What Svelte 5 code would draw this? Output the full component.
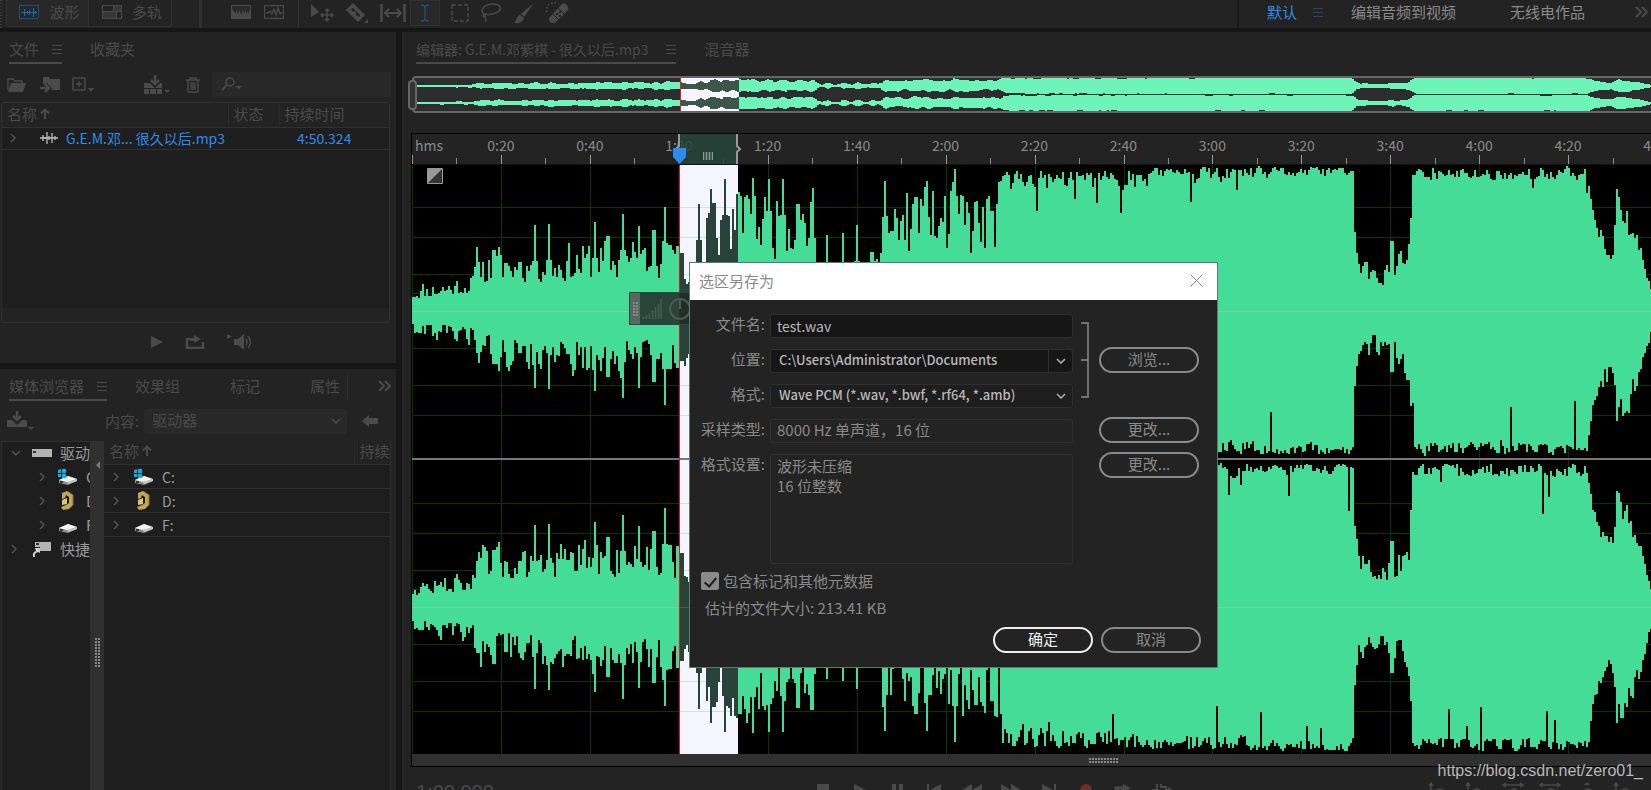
<script>
	const W = 1239;
	const H = 588;
	const SEL = [267, 326];
	const STEP = 88.94;

	// x, quiet level, loud level, skew (below 1 leans to the loud side)
	const envelope = [
		[0, 12, 34, 2],
		[60, 18, 44, 2],
		[63, 26, 70, 1.6],
		[250, 32, 86, 1.6],
		[267, 24, 66, 2],
		[292, 28, 76, 2],
		[294, 44, 134, 1.2],
		[326, 52, 130, 1.1],
		[400, 44, 134, 1.1],
		[402, 16, 46, 3],
		[468, 18, 60, 3],
		[469, 44, 136, 1.2],
		[588, 44, 138, 1.1],
		[590, 92, 142, 0.3],
		[700, 98, 142, 0.3],
		[770, 116, 145, 0.5],
		[940, 130, 145, 1.3],
		[941, 82, 95, 1],
		[946, 36, 62, 1],
		[960, 22, 46, 1],
		[985, 24, 60, 1],
		[997, 38, 76, 1],
		[999, 130, 146, 1.3],
		[1175, 130, 146, 1.3],
		[1180, 92, 108, 1],
		[1192, 52, 76, 1],
		[1202, 46, 74, 1],
		[1204, 86, 124, 1],
		[1225, 56, 90, 1],
		[1230, 42, 56, 1],
		[1239, 14, 22, 1]
	];

	const spikes = [
		[65, 67], [81, 79], [93, 66], [107, 67], [122, 86], [136, 87], [155, 68], [182, 89], [195, 93],
		[210, 97], [226, 85], [241, 99], [252, 104], [257, 84], [265, 83], [269, 76], [286, 107],
		[298, 122], [301, 124], [312, 132], [324, 117], [327, 132], [335, 130], [340, 133], [356, 132],
		[370, 132], [385, 125], [399, 127], [414, 76], [430, 78], [444, 86], [459, 77], [472, 130],
		[503, 132], [514, 130], [542, 142], [563, 122], [579, 118], [979, 88], [1204, 122]
	];

	function random(seed) {
		let s = seed;
		return () => {
			s = (s * 1664525 + 1013904223) % 4294967296;
			return s / 4294967296;
		};
	}

	function levels(seed, scale) {
		const rnd = random(seed);
		const out = [];
		let drift = 0.5;
		let k = 0;
		for (let x = 0; x < W; x += 2) {
			while (k < envelope.length - 2 && envelope[k + 1][0] <= x) k++;
			const [x0, lo0, hi0, skew] = envelope[k];
			const [x1, lo1, hi1] = envelope[k + 1];
			const t = (x - x0) / (x1 - x0);
			const lo = lo0 + (lo1 - lo0) * t;
			const hi = hi0 + (hi1 - hi0) * t;
			drift = drift * 0.25 + rnd() * 0.75;
			let a = lo + (hi - lo) * Math.pow(drift, skew);
			if (x > 590 && x < 1175 && a > 110 && rnd() < 0.04) a -= rnd() * 45;
			if (x < 590) a *= scale;
			for (const [sx, top] of spikes) {
				const d = Math.abs(x - sx);
				if (d < 8) a = Math.max(a, top * scale - d * 18);
			}
			out.push(Math.min(a, 146));
		}
		return out;
	}

	// closed outline of one channel between two x positions
	function outline(up, down, mid, gain, from, to) {
		let d = `M${from} ${mid}`;
		const first = Math.floor(from / 2);
		const last = Math.min(Math.ceil(to / 2), up.length);
		for (let i = first; i < last; i++) {
			d += `V${Math.round(mid - up[i] * gain)}H${Math.min(i * 2 + 2, to)}`;
		}
		for (let i = last - 1; i >= first; i--) {
			d += `V${Math.round(mid + down[i] * gain)}H${Math.max(i * 2, from)}`;
		}
		return d + 'Z';
	}

	const channels = [
		{ mid: 146, up: levels(11, 1), down: levels(29, 0.9) },
		{ mid: 441, up: levels(47, 0.95), down: levels(83, 0.95) }
	];

	const smooth = (a) => a.map((v, i) => (v + (a[i + 1] ?? v) + (a[i - 1] ?? v)) / 3);
	const overview = channels.map((c, i) => ({ mid: 8 + i * 18, up: smooth(c.up), down: smooth(c.down) }));

	const offsets = [-104, -74, -37, -18, 0, 18, 37, 74, 104];
	const rows = channels.flatMap((c) => offsets.map((o) => c.mid + o + 0.5));
	const cols = Array.from({ length: 14 }, (_, i) => Math.round(i * STEP) + 0.5);
	const minor = Array.from({ length: 14 }, (_, i) => Math.round((i + 0.5) * STEP) + 0.5);
	const times = ['0:20', '0:40', '1:00', '1:20', '1:40', '2:00', '2:20', '2:40', '3:00', '3:20', '3:40', '4:00', '4:20', '4:40'];

	const drives = ['C:', 'D:', 'F:'];
	let fileName = $state('test.wav');
	let metadata = $state(true);
</script>

{#snippet menu()}
	<svg class="menu" width="10" height="10" viewBox="0 0 10 10"><path d="M0 1.5H10M0 5.5H10M0 9.5H10" stroke="currentColor" /></svg>
{/snippet}

{#snippet more()}
	<svg width="14" height="12" viewBox="0 0 14 12"><path d="M1 1L6 6L1 11M7 1L12 6L7 11" fill="none" stroke="currentColor" stroke-width="2" /></svg>
{/snippet}

{#snippet chevron()}
	<svg class="chevron" width="6" height="10" viewBox="0 0 6 10"><path d="M1 1L5 5L1 9" fill="none" stroke="#555" stroke-width="1.3" /></svg>
{/snippet}

{#snippet sorted()}
	<svg class="sorted" width="10" height="12" viewBox="0 0 10 12"><path d="M5 11V2M1 5.500L5 1.500L9 5.500" fill="none" stroke="currentColor" stroke-width="2" /></svg>
{/snippet}

{#snippet drive(name)}
	<svg class="drive" width="20" height="20" viewBox="0 0 20 20">
		{#if name === 'D:'}
			<path d="M4 2L9 0L15 4V14L11 18L5 19L3 16L8 14L11 12V6L8 4L7 7L4 8Z" fill="#c2a45a" />
			<path d="M4 9L9 7V13L4 14Z" fill="#dcc27a" />
			<path d="M9 0L15 4V14" fill="none" stroke="#8b713a" />
		{:else}
			<path d="M1 13L10 9L19 12V14L10 18L1 16Z" fill="#8c8c8c" />
			<path d="M1 13L10 9L19 12L9 15Z" fill="#f4f4f4" />
			<path d="M9 15L19 12V14L10 17Z" fill="#c9c9c9" />
			<path d="M2 14H5V16H2Z" fill="#333" />
			{#if name === 'C:'}
				<path d="M0 3L3 2V6H0ZM4 2H8V6H4ZM0 7H3V10H0ZM4 7H8V11H4Z" fill="#00b4f0" />
			{/if}
		{/if}
	</svg>
{/snippet}

<div class="app">
	<header class="toolbar">
		<span class="grip"></span>
		<div class="modes">
			<button class="mode on">
				<svg width="20" height="14" viewBox="0 0 20 14"><path d="M.5 .5H19.500V13.500H.5Z" fill="#1c2b39" stroke="#2c4b69" /><path d="M2 7.500H18M5.500 4V11M8.500 6V9M10.500 5V10M14.500 3V12M16.500 6V9" stroke="#376390" /></svg>
				波形
			</button>
			<button class="mode">
				<svg width="20" height="14" viewBox="0 0 20 14"><path d="M1 7H14V13H1ZM12 1H19V6H12Z" fill="#373737" /><path d="M.5 .5H19.500V13.500H.5ZM1 6.500H19M11.500 1V6M14.500 7V13" fill="none" stroke="currentColor" /></svg>
				多轨
			</button>
		</div>
		<span class="bar"></span>
		<div class="tools views">
			<button aria-label="频谱"><svg width="20" height="14" viewBox="0 0 20 14"><path d="M0 0H20V14H0Z" fill="currentColor" /><path d="M1 1H19V7L18 5V9L16 6V10L14 4V9L12 5V8L11 4V10L8 5V9L7 6V10L5 4V9L3 6V8L1 3Z" fill="#2a2a2a" /></svg></button>
			<button aria-label="音高"><svg width="20" height="14" viewBox="0 0 20 14"><path d="M.5 .5H19.500V13.500H.5ZM2 8H4L6 6L8 9L10 4L12 10L14 3L16 9L18 7" fill="none" stroke="currentColor" stroke-width="1.300" /></svg></button>
		</div>
		<div class="tools">
			<button aria-label="移动"><svg width="24" height="20" viewBox="0 0 24 20"><path d="M1 1L9 9L6 11L1 14Z" fill="currentColor" /><path d="M17 6V18M11 12H23M15 8L17 6L19 8M15 16L17 18L19 16M13 10L11 12L13 14M21 10L23 12L21 14" fill="none" stroke="currentColor" stroke-width="1.500" /></svg></button>
			<button aria-label="剃刀"><svg width="24" height="22" viewBox="0 0 24 22"><path d="M1 8L8 1L20 13L13 20Z" fill="currentColor" /><path d="M6 7L8 6L15 13L14 15L11 13L11 10L7 9Z" fill="#232323" /><path d="M23 17V21H19Z" fill="currentColor" /></svg></button>
			<button aria-label="滑动"><svg width="26" height="18" viewBox="0 0 26 18"><path d="M1.500 0V18M24.500 0V18" stroke="currentColor" stroke-width="2.500" /><path d="M5 9H21M9 5L5 9L9 13M17 5L21 9L17 13" fill="none" stroke="currentColor" stroke-width="2" /></svg></button>
			<button class="picked" aria-label="时间选择"><svg width="10" height="18" viewBox="0 0 10 18"><path d="M1 1C3 1 5 1 5 4V14C5 17 3 17 1 17M9 1C7 1 5 1 5 4M5 14C5 17 7 17 9 17" fill="none" stroke="#2b4f73" stroke-width="1.300" /></svg></button>
			<button aria-label="框选"><svg width="18" height="18" viewBox="0 0 18 18"><path d="M1 1H17V17H1Z" fill="none" stroke="currentColor" stroke-width="1.500" stroke-dasharray="4 2" /></svg></button>
			<button aria-label="套索"><svg width="22" height="20" viewBox="0 0 22 20"><path d="M4 11C-1 7 5 1 13 1C20 1 22 5 19 8C16 11 9 12 5 11C3 11 2 13 4 14C6 14 6 12 4 11M4 14C7 15 6 17 5 19" fill="none" stroke="currentColor" stroke-width="1.500" /></svg></button>
			<button aria-label="画笔"><svg width="22" height="21" viewBox="0 0 22 21"><path d="M21 0L11 14L8 11Z" fill="currentColor" /><path d="M7 12L11 15C10 19 6 21 1 20C4 18 3 13 7 12Z" fill="currentColor" /></svg></button>
			<button aria-label="污点修复"><svg width="24" height="22" viewBox="0 0 24 22"><path d="M3 16L16 2Q18 0 21 3Q23 6 22 8L9 21Q7 22 4 20Q2 18 3 16Z" fill="currentColor" /><path d="M7 12L13 18M12 6L18 12" stroke="#232323" /><path d="M10 11H12V13H10ZM13 9H15V11H13ZM13 13H15V15H13Z" fill="#232323" /><path d="M1 10C-1 4 4 0 11 1" fill="none" stroke="currentColor" stroke-width="1.500" stroke-dasharray="1.500 2" /></svg></button>
		</div>
		<nav class="spaces">
			<button class="space on">默认 {@render menu()}</button>
			<button class="space">编辑音频到视频</button>
			<button class="space last">无线电作品</button>
			<button class="dim" aria-label="更多">{@render more()}</button>
		</nav>
	</header>

	<div class="workspace">
		<aside class="side">
			<section class="panel files">
				<div class="tabs">
					<button class="tab on">文件 {@render menu()}</button>
					<button class="tab">收藏夹</button>
				</div>
				<div class="actions">
					<button aria-label="打开"><svg width="20" height="14" viewBox="0 0 20 14"><path d="M1 12V1H6L8 3H15V5" fill="none" stroke="currentColor" stroke-width="1.500" /><path d="M4 5H19L16 14H1Z" fill="currentColor" /></svg></button>
					<button class="wide" aria-label="导入"><svg width="21" height="17" viewBox="0 0 21 17"><path d="M3 8V1H9L10 3H20V14H11L12 12L7 7V8Z" fill="currentColor" /><path d="M0 12H8M5 8L9 12L5 16" fill="none" stroke="currentColor" stroke-width="2.500" /></svg></button>
					<button class="new" aria-label="新建"><svg width="22" height="16" viewBox="0 0 22 16"><path d="M1 1H13V13H1ZM7 4V10M4 7H10" fill="none" stroke="currentColor" stroke-width="1.500" /><path d="M16 11H22L19 15Z" fill="currentColor" /></svg></button>
					<button aria-label="插入"><svg width="26" height="20" viewBox="0 0 26 20"><path d="M0 8H6L11 13L16 8H18V19H0Z" fill="currentColor" /><path d="M0 13.500H18M5.500 14V19M12.500 14V19" stroke="#232323" /><path d="M11 0V8M7 5L11 9L15 5" fill="none" stroke="currentColor" stroke-width="2.500" /><path d="M20 15H26L23 18Z" fill="currentColor" /></svg></button>
					<button class="bin" aria-label="删除"><svg width="14" height="16" viewBox="0 0 14 16"><path d="M0 3H14M4 3V1H10V3M2 3V15H12V3M5 5V13M7 5V13M9 5V13" fill="none" stroke="currentColor" stroke-width="1.400" /></svg></button>
					<label class="search">
						<svg width="22" height="15" viewBox="0 0 22 15"><circle cx="9" cy="5" r="4" fill="none" stroke="currentColor" stroke-width="1.500" /><path d="M6 8L1 13" stroke="currentColor" stroke-width="1.800" /><path d="M14 9H21L17.500 12Z" fill="currentColor" /></svg>
						<input type="text" aria-label="搜索" />
					</label>
				</div>
				<div class="list">
					<table>
						<thead>
							<tr><th>名称{@render sorted()}</th><th class="state">状态</th><th class="length">持续时间</th></tr>
						</thead>
						<tbody>
							<tr>
								<td>
									<div class="file">
										{@render chevron()}
										<svg width="18" height="14" viewBox="0 0 18 14"><path d="M0 7H18M3 4V10M5 6V8M7 1V13M9 5V9M12 2V12M15 5V9" stroke="#bdbdbd" stroke-width="1.300" /></svg>
										G.E.M.邓... 很久以后.mp3
									</div>
								</td>
								<td></td>
								<td class="clock">4:50.324</td>
							</tr>
						</tbody>
					</table>
					<div class="empty"></div>
				</div>
				<div class="preview">
					<button aria-label="播放"><svg width="12" height="12" viewBox="0 0 12 12"><path d="M0 0L12 6L0 12Z" fill="currentColor" /></svg></button>
					<button aria-label="循环"><svg width="20" height="14" viewBox="0 0 20 14"><path d="M5 4H2V13H18V7" fill="none" stroke="currentColor" stroke-width="2.500" /><path d="M5 3H9V0L16 4L9 8V6H5Z" fill="currentColor" /></svg></button>
					<button aria-label="自动播放"><svg width="26" height="16" viewBox="0 0 26 16"><path d="M0 0L5 2.500L0 5ZM7 5H11L17 0V16L11 11H7Z" fill="currentColor" /><path d="M19 5Q21 8 19 11M21 2Q26 8 21 14" fill="none" stroke="currentColor" stroke-width="1.500" /></svg></button>
				</div>
			</section>

			<section class="panel media">
				<div class="tabs">
					<button class="tab on">媒体浏览器 {@render menu()}</button>
					<button class="tab fx">效果组</button>
					<button class="tab mark">标记</button>
					<button class="tab props">属性</button>
					<button class="dim push" aria-label="更多">{@render more()}</button>
				</div>
				<div class="content">
					<button aria-label="导入"><svg width="27" height="20" viewBox="0 0 27 20"><path d="M0 9H5L10 14L15 9H19L20 11V16H0Z" fill="currentColor" /><path d="M10 0V8M6 5L10 9L14 5" fill="none" stroke="currentColor" stroke-width="2.500" /><path d="M21 16H27L24 19Z" fill="currentColor" /></svg></button>
					<label for="place">内容:</label>
					<div class="pick flat">
						<select id="place"><option>驱动器</option></select>
						<svg width="10" height="6" viewBox="0 0 10 6"><path d="M1 1L5 5L9 1" fill="none" stroke="currentColor" stroke-width="1.500" /></svg>
					</div>
					<button class="back" aria-label="后退"><svg width="16" height="12" viewBox="0 0 16 12"><path d="M0 6L7 0V3H16V9H7V12Z" fill="currentColor" /></svg></button>
				</div>
				<div class="browser">
					<ul class="tree">
						<li>
							<svg class="chevron" width="10" height="6" viewBox="0 0 10 6"><path d="M1 1L5 5L9 1" fill="none" stroke="#555" stroke-width="1.300" /></svg>
							<svg width="20" height="10" viewBox="0 0 20 10"><path d="M0 1H20V9H0Z" fill="#b4b4b4" /><path d="M1 3H4V5H1Z" fill="#333" /></svg>
							驱动器
						</li>
						{#each drives as name}
							<li class="child">{@render chevron()}{@render drive(name)}{name}</li>
						{/each}
						<li>
							{@render chevron()}
							<svg class="link" width="20" height="18" viewBox="0 0 20 18"><path d="M3 2H19V11H8V7H3Z" fill="#b4b4b4" /><path d="M4 3H7V5H4Z" fill="#333" /><path d="M1 17Q0 12 4 11L3 8H8V13L6 12Q2 13 3 17Z" fill="#d0d0d0" /></svg>
							快捷键
						</li>
					</ul>
					<div class="splitter">
						<svg width="4" height="8" viewBox="0 0 4 8"><path d="M4 0V8L0 4Z" fill="#777" /></svg>
						<span class="dots"></span>
					</div>
					<div class="volumes">
						<table>
							<thead>
								<tr><th>名称{@render sorted()}</th><th class="cut">持续时间</th></tr>
							</thead>
							<tbody>
								{#each drives as name}
									<tr><td colspan="2"><div class="volume">{@render chevron()}{@render drive(name)}{name}</div></td></tr>
								{/each}
							</tbody>
						</table>
					</div>
				</div>
			</section>
		</aside>

		<main class="panel editor">
			<div class="tabs">
				<button class="tab on">编辑器: G.E.M.邓紫棋 - 很久以后.mp3 {@render menu()}</button>
				<button class="tab mixer">混音器</button>
			</div>
			<div class="overview">
				<svg viewBox="0 0 {W} 34" preserveAspectRatio="none" shape-rendering="crispEdges">
					<rect x={SEL[0]} width={SEL[1] - SEL[0]} height="34" fill="#f5f5ff" />
					{#each overview as c}
						<path d={outline(c.up, c.down, c.mid, 0.058, 0, SEL[0])} fill="#6df5b9" />
						<path d={outline(c.up, c.down, c.mid, 0.058, ...SEL)} fill="#3c5649" />
						<path d={outline(c.up, c.down, c.mid, 0.058, SEL[1], W)} fill="#6df5b9" />
					{/each}
					<path d="M{SEL[0]} 0V34" stroke="#d22" />
				</svg>
				<span class="handle"></span>
			</div>
			<div class="deck">
				<div class="ruler">
					<div class="labels">
						<span class="unit">hms</span>
						{#each times as t}
							<span class="time">{t}</span>
						{/each}
					</div>
					<svg class="ticks" viewBox="0 0 {W} 9" preserveAspectRatio="none" shape-rendering="crispEdges">
						{#each cols as x}<path d="M{x} 0V9" stroke="#999" />{/each}
						{#each minor as x}<path d="M{x} 3V9" stroke="#8a8a8a" />{/each}
					</svg>
					<div class="range">
						<svg class="end start" width="6" height="30" viewBox="0 0 6 30"><path d="M5 0V12L2 15L5 18" fill="none" stroke="#999" stroke-width="2" /></svg>
						<svg class="pins" width="10" height="8" viewBox="0 0 10 8"><path d="M.5 0V8M3.500 0V8M6.500 0V8M9.500 0V8" stroke="#8d9b94" stroke-width="1.500" /></svg>
						<svg class="end" width="6" height="30" viewBox="0 0 6 30"><path d="M1 0V12L4 15L1 18V30" fill="none" stroke="#999" stroke-width="2" /></svg>
						<svg class="playhead" width="13" height="16" viewBox="0 0 13 16"><path d="M0 0H13V9L6.500 16L0 9Z" fill="#2d8ceb" /></svg>
					</div>
				</div>
				<div class="stage">
					<svg class="waves" viewBox="0 0 {W} {H}" preserveAspectRatio="none" shape-rendering="crispEdges">
						{#each rows as y}<path d="M0 {y}H{W}" stroke="#063806" />{/each}
						{#each cols as x}<path d="M{x} 0V{H}" stroke="#063806" />{/each}
						<rect x={SEL[0]} width={SEL[1] - SEL[0]} height={H} fill="#f5f5ff" />
						{#each rows as y}<path d="M{SEL[0]} {y}H{SEL[1]}" stroke="#cde5cf" />{/each}
						{#each channels as c}
							<path d={outline(c.up, c.down, c.mid, 1, 0, SEL[0])} fill="#45dc98" />
							<path d={outline(c.up, c.down, c.mid, 1, ...SEL)} fill="#28443a" />
							<path d={outline(c.up, c.down, c.mid, 1, SEL[1], W)} fill="#45dc98" />
							<path d="M0 {c.mid + 0.5}H{W}" stroke="#fff" stroke-opacity=".12" />
						{/each}
						<path d="M0 293.500H{W}" stroke="#777" />
						<path d="M{SEL[0] + 0.5} 0V{H}" stroke="#e01818" />
					</svg>
					<svg class="fade" width="16" height="16" viewBox="0 0 16 16"><path d="M.5 .5H15.500V15.500H.5Z" fill="#333" stroke="#999" /><path d="M1 1H15L1 15Z" fill="#999" /></svg>
					<div class="hud">
						<span class="hudgrip"><span class="dots"></span></span>
						<svg width="20" height="20" viewBox="0 0 20 20"><path d="M1.500 20V18M4.500 20V16M7.500 20V14M10.500 20V11M13.500 20V8M16.500 20V5M19 20V0" stroke="#4a5c54" stroke-width="1.500" /></svg>
						<svg width="24" height="24" viewBox="0 0 24 24"><circle cx="12" cy="12" r="10" fill="none" stroke="#555" stroke-width="2" /><path d="M12 2V12" stroke="#555" stroke-width="2" /></svg>
					</div>
				</div>
				<div class="scroll"><span class="dots flatdots"></span></div>
			</div>
			<footer class="transport">
				<span class="now">1:00.000</span>
				<div class="buttons">
					<button aria-label="停止"><svg width="18" height="12" viewBox="0 0 18 12"><path d="M3 0H15V12H3Z" fill="currentColor" /></svg></button>
					<button aria-label="播放"><svg width="18" height="12" viewBox="0 0 18 12"><path d="M3 0L15 6L3 12Z" fill="currentColor" /></svg></button>
					<button aria-label="暂停"><svg width="18" height="12" viewBox="0 0 18 12"><path d="M4 0H8V12H4ZM11 0H15V12H11Z" fill="currentColor" /></svg></button>
					<button aria-label="上一个"><svg width="18" height="12" viewBox="0 0 18 12"><path d="M2 0H4V12H2ZM16 0V12L5 6Z" fill="currentColor" /></svg></button>
					<button aria-label="快退"><svg width="20" height="12" viewBox="0 0 20 12"><path d="M10 0V12L0 6ZM20 0V12L10 6Z" fill="currentColor" /></svg></button>
					<button aria-label="快进"><svg width="20" height="12" viewBox="0 0 20 12"><path d="M0 0V12L10 6ZM10 0V12L20 6Z" fill="currentColor" /></svg></button>
					<button aria-label="下一个"><svg width="18" height="12" viewBox="0 0 18 12"><path d="M2 0L13 6L2 12ZM14 0H16V12H14Z" fill="currentColor" /></svg></button>
					<button aria-label="录制"><svg width="18" height="12" viewBox="0 0 18 12"><circle cx="9" cy="6" r="6" fill="#762c2c" /></svg></button>
					<button aria-label="循环播放"><svg width="18" height="12" viewBox="0 0 18 12"><path d="M2 12V4H10" fill="none" stroke="currentColor" stroke-width="3" /><path d="M9 0L17 4L9 8Z" fill="currentColor" /></svg></button>
					<button aria-label="跳过所选项目"><svg width="22" height="12" viewBox="0 0 22 12"><path d="M1 6H6V0M10 0V3H15V6H20" fill="none" stroke="currentColor" stroke-width="2" /><path d="M17 3L22 6L17 9Z" fill="currentColor" /></svg></button>
				</div>
				<div class="zooms">
					{#each ['+', '-', 'h+', 'h-', 'all', 'in'] as z}
						<button aria-label="缩放 {z}">
							<svg width="22" height="14" viewBox="0 0 22 14">
								{#if z[0] === 'h'}
									<path d="M2 3H20M4 1L1 3L4 5M18 1L21 3L18 5" fill="none" stroke="currentColor" stroke-width="1.500" />
								{:else if z === 'all'}
									<path d="M8 3L11 0L14 3Z" fill="currentColor" />
								{:else}
									<path d="M3 14V2M1 4L3 1L5 4" fill="none" stroke="currentColor" stroke-width="1.500" />
								{/if}
								<circle cx="12" cy="12" r="5" fill="none" stroke="currentColor" stroke-width="1.500" />
								{#if z.includes('+')}<path d="M12 9V14" stroke="currentColor" />{/if}
								<path d="M10 12H14" stroke="currentColor" />
							</svg>
						</button>
					{/each}
				</div>
			</footer>
		</main>
	</div>

	<div class="dialog" role="dialog" aria-labelledby="dialog-title">
		<div class="title">
			<span id="dialog-title">选区另存为</span>
			<button aria-label="关闭"><svg width="13" height="13" viewBox="0 0 13 13"><path d="M.5 .5L12.500 12.500M12.500 .5L.5 12.500" stroke="#888" /></svg></button>
		</div>
		<form class="form" onsubmit={(e) => e.preventDefault()}>
			<label for="name">文件名:</label>
			<input id="name" class="box dark name" type="text" bind:value={fileName} />
			<svg class="bracket" width="8" height="76" viewBox="0 0 8 76"><path d="M0 1H7V75H0M0 38H7" fill="none" stroke="#8a8a8a" stroke-width="1.500" /></svg>

			<label for="folder">位置:</label>
			<div class="pick dark split">
				<select id="folder"><option>C:\Users\Administrator\Documents</option></select>
				<svg width="10" height="6" viewBox="0 0 10 6"><path d="M1 1L5 5L9 1" fill="none" stroke="#b0b0b0" stroke-width="1.500" /></svg>
			</div>
			<button class="pill">浏览...</button>

			<label for="format">格式:</label>
			<div class="pick">
				<select id="format"><option>Wave PCM (*.wav, *.bwf, *.rf64, *.amb)</option></select>
				<svg width="10" height="6" viewBox="0 0 10 6"><path d="M1 1L5 5L9 1" fill="none" stroke="#b0b0b0" stroke-width="1.500" /></svg>
			</div>

			<label for="sample">采样类型:</label>
			<input id="sample" class="box" type="text" readonly value="8000 Hz 单声道，16 位" />
			<button class="pill">更改...</button>

			<label for="settings">格式设置:</label>
			<textarea id="settings" class="box" readonly value={'波形未压缩\n16 位整数'}></textarea>
			<button class="pill">更改...</button>
		</form>
		<label class="check">
			<input type="checkbox" bind:checked={metadata} />
			包含标记和其他元数据
		</label>
		<p class="size">估计的文件大小: 213.41 KB</p>
		<div class="answer">
			<button class="pill main">确定</button>
			<button class="pill">取消</button>
		</div>
	</div>

	<a class="source" href="https://blog.csdn.net/zero01_">https://blog.csdn.net/zero01_</a>
</div>

<style>
	:global(body) {
		background: #161616;
		overflow: hidden;
	}
	* {
		box-sizing: border-box;
	}
	.app {
		position: relative;
		display: flex;
		flex-direction: column;
		gap: 4px;
		height: 100vh;
		overflow: hidden;
		color: #4a4a4a;
		font: 15px/20px 'Noto Sans CJK SC', sans-serif;
	}
	button,
	input,
	select,
	textarea {
		margin: 0;
		padding: 0;
		border: 0;
		background: none;
		color: inherit;
		font: inherit;
		outline: none;
	}
	button {
		display: flex;
		align-items: center;
		justify-content: center;
		white-space: nowrap;
	}
	svg {
		display: block;
		flex: none;
	}
	.dots {
		display: block;
		width: 5px;
		height: 30px;
		background: radial-gradient(circle at 1px 1px, #888 1px, transparent 1px) 0 0 / 3px 3px;
	}

	/* top bar */
	.toolbar {
		display: flex;
		flex: none;
		height: 28px;
		background: #232323;
	}
	.grip {
		width: 2px;
		margin-right: 4px;
		background: repeating-linear-gradient(#3c3c3c 0 1px, transparent 1px 3px);
	}
	.modes {
		display: flex;
		height: 27px;
		border: 1px solid #303030;
		border-top: 0;
		border-radius: 0 0 3px 3px;
	}
	.mode {
		gap: 10px;
		width: 82px;
		padding: 0 0 2px 4px;
	}
	.mode.on {
		background: #282828;
		border-right: 1px solid #303030;
	}
	.bar {
		width: 3px;
		margin-left: 27px;
		background: #303030;
	}
	.tools {
		display: flex;
		align-items: center;
		gap: 11px;
		padding: 0 0 2px 11px;
	}
	.views {
		gap: 13px;
		padding: 0 14px 4px 29px;
		border-right: 1px solid #303030;
	}
	.picked {
		width: 30px;
		height: 26px;
		margin-left: -7px;
		border: 1px solid #303030;
		background: #282828;
	}
	.spaces {
		display: flex;
		align-items: center;
		margin-left: auto;
		padding: 0 2px 4px 28px;
		border-left: 2px solid #1b1b1b;
	}
	.space {
		gap: 16px;
		margin-right: 54px;
		color: #8a8a8a;
	}
	.space.on {
		margin-right: 28px;
		color: #2d8ceb;
	}
	.space.last {
		margin-right: 50px;
	}
	.space.on :global(.menu) {
		color: #284766;
	}

	.workspace {
		display: flex;
		flex: 1;
		gap: 6px;
		min-height: 0;
	}
	.side {
		display: flex;
		flex: 0 0 396px;
		flex-direction: column;
		gap: 6px;
		min-width: 0;
		min-height: 0;
	}
	.panel {
		display: flex;
		flex-direction: column;
		background: #232323;
	}
	.tabs {
		display: flex;
		flex: none;
		align-items: flex-start;
		height: 32px;
		padding: 6px 4px 0 9px;
	}
	.tab {
		gap: 13px;
		height: 26px;
		padding-bottom: 2px;
		border-bottom: 2px solid transparent;
	}
	.tab.on {
		margin-right: 28px;
		border-color: #4a4a4a;
	}

	/* files panel */
	.files {
		flex: none;
	}
	.actions {
		display: flex;
		align-items: center;
		height: 25px;
		margin: 8px 5px 5px 7px;
	}
	.wide {
		margin: 0 11px 0 13px;
	}
	.new {
		margin-right: 50px;
	}
	.bin {
		margin: 0 12px 0 16px;
	}
	.search {
		display: flex;
		flex: 1;
		align-items: center;
		min-width: 0;
		height: 25px;
		padding: 0 9px;
		border-radius: 2px;
		background: #292929;
	}
	.search input {
		flex: 1;
		width: 0;
		min-width: 0;
	}
	.list {
		margin: 0 6px 0 1px;
		border: 1px solid #303030;
		border-radius: 3px;
	}
	table {
		width: 100%;
		border-collapse: collapse;
		table-layout: fixed;
	}
	th,
	td {
		padding: 0;
		font-weight: 400;
		text-align: left;
		white-space: nowrap;
	}
	th {
		height: 24px;
		padding: 0 0 2px 5px;
	}
	.sorted {
		display: inline-block;
		margin-left: 3px;
	}
	.state {
		width: 51px;
		border-left: 1px solid #2b2b2b;
	}
	.length {
		width: 110px;
		border-left: 1px solid #2b2b2b;
	}
	.list td {
		height: 22px;
		border-top: 1px solid #303030;
		border-bottom: 1px solid #303030;
		background: #1e1e1e;
		color: #2d8ceb;
		font-size: 14px;
	}
	.file {
		display: flex;
		align-items: center;
		padding-left: 8px;
	}
	.file :global(.chevron) {
		margin-right: 24px;
	}
	.file svg + svg {
		margin-right: 8px;
	}
	.list .clock {
		padding-left: 18px;
	}
	.empty {
		height: 158px;
		margin-bottom: 14px;
		background: #1e1e1e;
	}
	.preview {
		display: flex;
		align-items: center;
		justify-content: center;
		gap: 22px;
		height: 40px;
		padding: 0 0 2px 8px;
	}

	/* media browser */
	.media {
		flex: 1;
		min-height: 0;
	}
	.fx {
		margin-right: 50px;
	}
	.mark {
		margin-right: 50px;
	}
	.props {
		padding-right: 7px;
		border-right: 1px solid #333;
	}
	.push {
		height: 22px;
		margin-left: auto;
	}
	.content {
		display: flex;
		flex: none;
		align-items: center;
		height: 25px;
		margin: 8px 0 7px 7px;
	}
	.content label {
		margin: 0 5px 0 71px;
	}
	.pick {
		position: relative;
		display: flex;
		align-items: center;
		height: 24px;
		border: 1px solid #2f2f2f;
		border-radius: 3px;
		background: #1e1e1e;
		color: #b8b8b8;
		font-size: 13px;
		font-weight: 500;
	}
	.pick select {
		width: 100%;
		height: 100%;
		padding: 0 30px 2px 8px;
		appearance: none;
	}
	.pick svg {
		position: absolute;
		right: 6px;
	}
	.pick.flat {
		width: 203px;
		height: 25px;
		border: 0;
		background: #292929;
		color: #4a4a4a;
		font-size: 15px;
		font-weight: 400;
	}
	.back {
		margin-left: 15px;
	}
	.browser {
		display: flex;
		flex: 1;
		min-height: 0;
		padding-left: 1px;
	}
	.tree {
		width: 90px;
		margin: 0;
		padding: 0;
		overflow: hidden;
		border: 1px solid #303030;
		border-bottom: 0;
		background: #1e1e1e;
		color: #9a9a9a;
		list-style: none;
	}
	.tree li {
		display: flex;
		align-items: center;
		gap: 8px;
		height: 24px;
		padding: 0 0 2px 9px;
		white-space: nowrap;
	}
	.tree :global(.chevron) {
		margin-right: 3px;
	}
	.tree .child {
		padding-left: 37px;
	}
	.tree .child :global(.chevron) {
		margin-right: 5px;
	}
	.tree .link {
		margin-left: 4px;
	}
	.splitter {
		display: flex;
		flex: none;
		flex-direction: column;
		align-items: center;
		gap: 169px;
		width: 13px;
		padding-top: 20px;
		background: #303030;
	}
	.volumes {
		flex: 1;
		min-width: 0;
		margin-right: 5px;
		border-right: 1px solid #303030;
		background: #1e1e1e;
		overflow: hidden;
	}
	.volumes tr {
		background: #1e1e1e;
	}
	.volumes thead tr {
		background: #232323;
	}
	.cut {
		width: 36px;
		overflow: hidden;
		border-left: 1px solid #2b2b2b;
	}
	.volumes td {
		height: 24px;
		border-top: 1px solid #303030;
		border-bottom: 1px solid #303030;
		color: #9a9a9a;
		font-size: 14px;
	}
	.volume {
		display: flex;
		align-items: center;
		gap: 8px;
		padding-left: 9px;
	}
	.volume :global(.chevron) {
		margin-right: 7px;
	}

	/* editor */
	.editor {
		flex: 1;
		min-width: 0;
		min-height: 0;
	}
	.editor .tabs {
		padding-left: 14px;
	}
	.editor .tab.on {
		gap: 18px;
		font-size: 14px;
	}
	.overview {
		position: relative;
		flex: none;
		height: 37px;
		margin: 12px 0 20px 10px;
		border: 2px solid #666;
		border-right: 0;
		border-radius: 4px 0 0 4px;
		background: #2d2d2d;
	}
	.overview > svg {
		width: 100%;
		height: 100%;
	}
	.handle {
		position: absolute;
		top: 2px;
		left: -6px;
		width: 9px;
		height: 30px;
		border: 2px solid #666;
		border-radius: 4px;
		background: #333;
	}
	.deck {
		display: flex;
		flex: 1;
		flex-direction: column;
		min-height: 0;
		margin-left: 9px;
		border: 1px solid #000;
		border-right: 0;
	}
	.ruler {
		position: relative;
		flex: none;
		height: 31px;
		overflow: hidden;
		border-bottom: 1px solid #111;
	}
	.labels {
		display: flex;
		height: 21px;
		align-items: center;
		color: #8a8a8a;
		font-size: 14px;
	}
	.unit {
		flex: 0 0 3.59%;
		padding-left: 3px;
	}
	.time {
		flex: 0 0 7.178%;
		text-align: center;
	}
	.ticks {
		width: 100%;
		height: 9px;
	}
	.range {
		position: absolute;
		top: 0;
		bottom: 0;
		left: 21.55%;
		display: flex;
		align-items: flex-end;
		justify-content: center;
		width: 4.76%;
		background: rgb(40 68 58 / 0.88);
	}
	.pins {
		margin-bottom: 4px;
	}
	.end {
		position: absolute;
		top: 0;
		right: -4px;
	}
	.start {
		right: auto;
		left: -5px;
	}
	.playhead {
		position: absolute;
		bottom: 0;
		left: -6px;
	}
	.stage {
		position: relative;
		flex: 1;
		min-height: 0;
		background: #000;
	}
	.waves {
		width: 100%;
		height: 100%;
	}
	.fade {
		position: absolute;
		top: 3px;
		left: 15px;
	}
	.hud {
		position: absolute;
		top: 127px;
		left: 217px;
		display: flex;
		align-items: center;
		gap: 6px;
		width: 90px;
		height: 33px;
		border: 1px solid #33443c;
		background: rgb(32 44 39 / 0.85);
	}
	.hudgrip {
		display: grid;
		width: 10px;
		height: 100%;
		margin-right: -4px;
		place-items: center;
		background: #56695f;
	}
	.hudgrip .dots {
		height: 14px;
	}
	.scroll {
		display: grid;
		flex: none;
		height: 12px;
		place-items: center;
		padding-left: 144px;
		background: #303030;
	}
	.flatdots {
		width: 30px;
		height: 5px;
	}
	.transport {
		display: flex;
		flex: none;
		align-items: flex-start;
		height: 23px;
		padding: 15px 16px 0 14px;
		overflow: hidden;
	}
	.now {
		flex: 1;
		font: 20px/20px 'Liberation Sans', sans-serif;
	}
	.buttons {
		display: flex;
		gap: 19px;
		padding: 2px 64px 0 0;
	}
	.zooms {
		display: flex;
		flex: 1;
		justify-content: flex-end;
		gap: 15px;
	}

	/* save dialog */
	.dialog {
		position: absolute;
		top: 263px;
		left: 690px;
		width: 527px;
		padding-bottom: 14px;
		outline: 1px solid #5d7a6c;
		background: #232323;
		color: #8a8a8a;
	}
	.title {
		display: flex;
		align-items: center;
		justify-content: space-between;
		height: 37px;
		padding: 0 14px 2px 9px;
		background: #fff;
	}
	.form {
		display: grid;
		grid-template-columns: 75px 303px 8px 100px;
		grid-template-rows: repeat(4, 24px) 110px;
		gap: 11px 0;
		padding-top: 14px;
	}
	.form label {
		grid-column: 1;
		height: 20px;
		text-align: right;
	}
	.box,
	.pick {
		grid-column: 2;
		margin-left: 5px;
		margin-right: -5px;
	}
	.pick.flat {
		margin: 0;
	}
	.box {
		padding: 0 6px 2px;
		border: 1px solid #2f2f2f;
		border-radius: 3px;
		resize: none;
	}
	.name {
		padding-bottom: 0;
		font-size: 14px;
	}
	textarea.box {
		padding-top: 1px;
	}
	.dark {
		background: #161616;
		color: #b8b8b8;
	}
	.split select {
		background: linear-gradient(#2f2f2f, #2f2f2f) right 23px top / 1px 100% no-repeat;
	}
	.bracket {
		grid-row: 1 / 4;
		grid-column: 3;
		margin: 8px 0 0 13px;
	}
	.pill {
		width: 100px;
		height: 26px;
		padding-bottom: 2px;
		border: 2px solid #8a8a8a;
		border-radius: 13px;
	}
	.form .pill {
		grid-column: 4;
		margin: -2px 0 0 23px;
	}
	.pill.main {
		border-color: #f0f0f0;
		color: #f0f0f0;
	}
	.check {
		display: flex;
		align-items: center;
		gap: 4px;
		margin: 7px 0 0 11px;
	}
	.check input {
		display: grid;
		width: 18px;
		height: 18px;
		place-items: center;
		border-radius: 2px;
		background: #8a8a8a;
		appearance: none;
	}
	.check input:checked::before {
		width: 5px;
		height: 10px;
		border: solid #1e1e1e;
		border-width: 0 2px 2px 0;
		transform: rotate(40deg);
		content: '';
	}
	.size {
		margin: 7px 0 9px 15px;
	}
	.answer {
		display: flex;
		justify-content: flex-end;
		gap: 8px;
		padding-right: 16px;
	}
	.source {
		position: absolute;
		right: 8px;
		bottom: 10px;
		color: #b8b8b8;
		font: 16px/18px 'Liberation Sans', sans-serif;
		text-decoration: none;
	}
</style>
